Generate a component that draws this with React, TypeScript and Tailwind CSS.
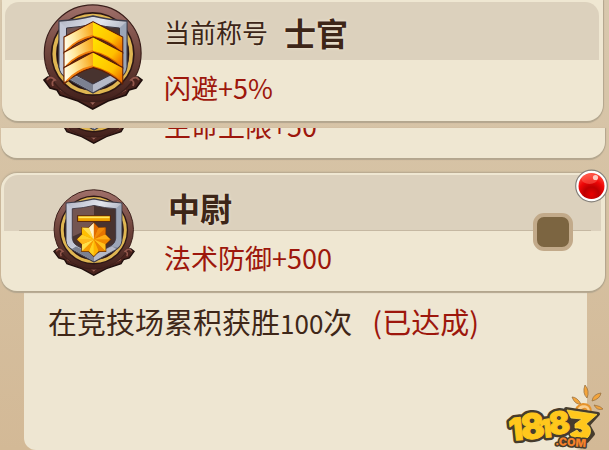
import { useId, type ReactNode } from "react";

type BadgeKind = "chevrons" | "star";

const STAR_POINTS = Array.from({ length: 16 }, (_, i) => {
  const angle = (Math.PI / 8) * i - Math.PI / 2;
  const r = i % 2 === 0 ? 20.5 : 15.5;
  return [49.7 + Math.cos(angle) * r, 61.5 + Math.sin(angle) * r];
});

const STAR_COLORS = [
  "#e06c00", "#f28a08", "#e67400", "#ffad14", "#f08a00", "#ffc21c", "#e98200", "#ffb400",
  "#ffd21e", "#f79c00", "#ffe14a", "#ffb81c", "#ffd028", "#ffc000", "#ffdf50", "#fff3cc",
];

function RankBadge({ kind, className }: { kind: BadgeKind; className?: string }) {
  const id = useId();
  const ring = `${id}ring`;
  const steel = `${id}steel`;
  const left = `${id}left`;
  const right = `${id}right`;

  return (
    <svg viewBox="0 0 100 106" className={className} aria-hidden="true">
      <defs>
        <linearGradient id={ring} x1="0" y1="0" x2="0" y2="1">
          <stop offset="0" stopColor="#a0706a" />
          <stop offset="0.45" stopColor="#74483f" />
          <stop offset="1" stopColor="#42201b" />
        </linearGradient>
        <linearGradient id={steel} x1="0" y1="0" x2="1" y2="1">
          <stop offset="0" stopColor="#aeb2c2" />
          <stop offset="0.35" stopColor="#e2e5ed" />
          <stop offset="0.65" stopColor="#a0a5b5" />
          <stop offset="1" stopColor="#737888" />
        </linearGradient>
        <linearGradient id={left} x1="0" y1="0.6" x2="1" y2="0.4">
          <stop offset="0" stopColor="#fffbe6" />
          <stop offset="0.35" stopColor="#ffe9a0" />
          <stop offset="1" stopColor="#f9a81a" />
        </linearGradient>
        <linearGradient id={right} x1="0" y1="0" x2="1" y2="0.8">
          <stop offset="0" stopColor="#ffe400" />
          <stop offset="0.7" stopColor="#ffc000" />
          <stop offset="1" stopColor="#f07800" />
        </linearGradient>
      </defs>

      {/* Scroll base */}
      <path
        d="M5 73 L1 76 L7 84 L14 86 L17 91 L35 97 L49.7 105 L65 97 L83 91 L86 86 L93 84 L99 76 L95 73Z"
        fill="#4a241e"
        stroke="#1f0f0d"
        strokeWidth="1.6"
      />
      <path d="M17 86 Q32 94 40 93 L49.7 99 L60 93 Q68 94 83 86" fill="none" stroke="#8c5348" strokeWidth="1.4" />
      <path d="M45 95 L49.7 92 L54 95 L49.7 101Z" fill="#9b6257" />

      {/* Rings */}
      <circle cx="49.7" cy="49.3" r="48.4" fill={`url(#${ring})`} stroke="#3a1e1a" strokeWidth="1.2" />
      <circle cx="49.7" cy="50" r="42" fill="#2d1714" />
      <circle cx="49.7" cy="50" r="38.5" fill="#59392f" stroke="#dfb652" strokeWidth="3.6" />
      <circle cx="49.7" cy="50" r="35.5" fill="#49302b" stroke="#241310" strokeWidth="1.6" />
      <path d="M4 76 Q7 71 12 76 Q8 77 10 82" fill="none" stroke="#93574c" strokeWidth="1.8" />
      <path d="M96 76 Q93 71 88 76 Q92 77 90 82" fill="none" stroke="#93574c" strokeWidth="1.8" />

      {/* Shield */}
      <path
        d="M16 17 Q34 16 50 12 Q66 16 84 17 L84 63 Q83 71 75 75 L50 89 L25 75 Q17 71 16 63Z"
        fill={`url(#${steel})`}
        stroke="#3e3d4a"
        strokeWidth="1.3"
      />
      <path d="M16.8 18 L23.5 24 L23.5 62 L28 70 L21 71 Q17 68 16.8 63Z" fill="#c3c7d6" />
      <path d="M83.2 18 L76.5 24 L76.5 62 L72 70 L79 71 Q83 68 83.2 63Z" fill="#9ba5b7" />
      <path d="M28 70 L50 80 L50 88 L23 73Z" fill="#7c8191" />
      <path d="M72 70 L50 80 L50 88 L77 73Z" fill="#b5b9c7" />
      <path
        d="M23.5 24 Q38 23 50 20 Q62 23 76.5 24 L76.5 60 Q76 66 71 69 L50 80 L29 69 Q24 66 23.5 60Z"
        fill="#48332f"
        stroke="#383440"
      />
      <path d="M24 24.5 Q38 23.5 50 20.5 L50 46 L24 58Z" fill="#735551" />

      {kind === "chevrons" &&
        [0, 15.3, 30.6].map((dy) => (
          <g key={dy} transform={`translate(0 ${dy})`} strokeLinejoin="round">
            <path
              d="M50 17.7 L79.7 33 L79.7 49.5 Q66 37 50 33 Q34 37 21 49.5 L21 33Z"
              fill="#e06a00"
              stroke="#5e1e06"
              strokeWidth="1.2"
            />
            <path d="M50 18.2 L50 31.5 Q34 35 21.6 47.5 L21.6 33.4Z" fill={`url(#${left})`} />
            <path d="M50 18.2 L79.2 33.4 L79.2 47 Q66 35 50 31.5Z" fill={`url(#${right})`} />
            <path d="M24 46 Q34 35 50 31.5" fill="none" stroke="#f08010" strokeWidth="1.6" />
          </g>
        ))}

      {kind === "star" && (
        <g>
          <rect x="30" y="32.5" width="40" height="7" fill="#f0a200" stroke="#56240c" strokeWidth="1.2" />
          <path d="M31 34.5 H69" stroke="#ffe75c" strokeWidth="2" />
          <polygon
            points={STAR_POINTS.map((p) => p.join(",")).join(" ")}
            fill="#f29b00"
            stroke="#67300a"
            strokeWidth="1.6"
          />
          {STAR_POINTS.map((p, i) => {
            const next = STAR_POINTS[(i + 1) % 16];
            return (
              <polygon
                key={i}
                points={`49.7,61.5 ${p.join(",")} ${next.join(",")}`}
                fill={STAR_COLORS[i]}
              />
            );
          })}
        </g>
      )}
    </svg>
  );
}

function RedDot() {
  return (
    <svg viewBox="0 0 34 34" className="absolute -top-1 -right-1 z-20 h-[34px] w-[34px]" aria-hidden="true">
      <defs>
        <radialGradient id="dot" cx="0.5" cy="0.82" r="0.8">
          <stop offset="0" stopColor="#e90000" />
          <stop offset="0.35" stopColor="#bd0000" />
          <stop offset="0.65" stopColor="#ef0707" />
          <stop offset="1" stopColor="#ff4a3c" />
        </radialGradient>
      </defs>
      <circle cx="16.5" cy="17" r="15.8" fill="#fff" stroke="#858079" strokeWidth="1.2" />
      <circle cx="16.5" cy="17" r="13" fill="url(#dot)" />
      <ellipse cx="14.5" cy="10" rx="8" ry="5" fill="#ff6a5a" opacity="0.5" />
      <circle cx="20.5" cy="8.5" r="2.6" fill="#ffd9d2" opacity="0.9" />
    </svg>
  );
}

const LOGO_DIGITS = [
  { text: "1", x: 6, y: 57, size: 31 },
  { text: "8", x: 18, y: 56, size: 35 },
  { text: "1", x: 37, y: 54, size: 25 },
  { text: "8", x: 46, y: 51, size: 31 },
];

function LogoDigits() {
  return LOGO_DIGITS.map((d, i) => (
    <text key={i} x={d.x} y={d.y} fontSize={d.size} transform={`rotate(-6 ${d.x} ${d.y})`}>
      {d.text}
    </text>
  ));
}

function SiteLogo() {
  return (
    <svg
      viewBox="0 0 105 66"
      className="absolute right-0 bottom-0 h-[66px] w-[105px] font-['Inter','Lato',sans-serif]"
      role="img"
      aria-label="18183.com"
    >
      {/* Sun */}
      <g fill="#f3a43b" stroke="#9b7444" strokeWidth="0.8">
        <path d="M68 13 Q73 13 77 20 Q71 21 68 13Z" />
        <path d="M81 1 Q86 7 83 14 Q78 9 81 1Z" />
        <path d="M97 9 Q96 15 88 17 Q89 10 97 9Z" />
        <path d="M90 21 Q97 22 99 25 Q93 27 90 21Z" />
      </g>
      <path
        d="M72 31 Q71 21 79 20 Q87 20 87 28 Q86 32 81 31 Q76 30 78 26 Q81 23 83 27"
        fill="#f8cf91"
        stroke="#e6932b"
        strokeWidth="2"
      />

      <g fontWeight="900" strokeLinejoin="round">
        <g fill="#463c2d" stroke="#463c2d" strokeWidth="6">
          <LogoDigits />
          <path d="M62 25 L94 30 L84 41 L89 50 L83 57 L70 57 L64 46Z" strokeWidth="4" />
        </g>
        <g fill="#ffc71c" stroke="#ffc71c" strokeWidth="1">
          <LogoDigits />
        </g>
        {/* Wedge-topped last digit */}
        <path
          d="M63 26 L93 30.5 L82 40 Q88 43 86 50 Q83 57 74 56 Q68 55 66 50 L73 46 Q75 50 78 48 Q80 45 74 44 L71 44 L71 40 L78 35 L67 34Z"
          fill="#ffc71c"
          stroke="#ffda45"
          strokeWidth="0.8"
        />
        <text
          x="51"
          y="61"
          fontSize="11"
          fill="#f5822a"
          stroke="#463c2d"
          strokeWidth="3"
          paintOrder="stroke"
          transform="rotate(4 51 61)"
        >
          .COM
        </text>
      </g>
    </svg>
  );
}

function TitleCard({ badge, title, titleClass, effect, action }: {
  badge: ReactNode;
  title: ReactNode;
  titleClass: string;
  effect: string;
  action?: ReactNode;
}) {
  return (
    <>
      <div className="z-10 col-start-1 row-span-2 row-start-1 flex items-center justify-end">{badge}</div>
      <div className="col-span-full row-start-1 mt-0.5 mr-1 ml-[3px] rounded-t-[14px] bg-[#dcd1bd]" />
      <h2
        className={`col-start-2 row-start-1 flex items-center gap-4 text-[32px] leading-8 font-bold text-[#3d2618] [text-shadow:0_0_3px_#f4ecd8] ${titleClass}`}
      >
        {title}
      </h2>
      <p className="col-start-2 row-start-2 flex items-center pb-1.5 text-[27px] leading-8 text-[#9d170c]">{effect}</p>
      {action}
    </>
  );
}

const CARD = "relative bg-[#efe7d2]";

export default function App() {
  return (
    <main className="relative flex min-h-screen flex-col overflow-hidden bg-linear-to-b from-[#d8c8ad] to-[#d3b996] font-['Noto_Sans_CJK_SC',sans-serif]">
      {/* Current title */}
      <section
        className={`${CARD} mr-[6px] ml-[2px] grid grid-cols-[162px_1fr] grid-rows-[60px_61px] rounded-b-[16px] shadow-[0_2px_1px_#b3a68e,1px_0_1px_#b3a68e]`}
      >
        <TitleCard
          badge={<RankBadge kind="chevrons" className="mr-[21px] mb-[8px] h-[106px] w-[100px]" />}
          titleClass="pt-1"
          title={
            <>
              <span className="text-[26px] font-normal">当前称号</span>
              <span>士官</span>
            </>
          }
          effect="闪避+5%"
        />
      </section>

      {/* Row scrolled under the header */}
      <section className={`${CARD} mt-[7px] mr-1 ml-px rounded-b-[16px] shadow-[0_2px_1px_#b3a68e,1px_0_1px_#b3a68e]`}>
        <div className="flex h-[30px] items-end overflow-hidden">
          <div className="flex w-[163px] shrink-0 justify-end">
            <RankBadge kind="star" className="mr-[29px] mb-[14px] h-[87px] w-[82px]" />
          </div>
          <p className="mb-4 text-[27px] leading-8 text-[#9d170c]">生命上限+50</p>
        </div>
      </section>

      <section
        className={`${CARD} z-10 mt-[15px] mr-1 ml-px grid grid-cols-[163px_1fr_auto] grid-rows-[58px_60px] rounded-[16px] shadow-[0_2px_1px_#b3a68e,1px_0_1px_#b3a68e,0_-1px_2px_#b3a68e]`}
      >
        <TitleCard
          badge={<RankBadge kind="star" className="mr-[29px] h-[87px] w-[82px]" />}
          titleClass="pt-2.5 pl-1"
          title="中尉"
          effect="法术防御+500"
          action={
            <>
              <div className="col-span-full row-start-1 mr-[14px] ml-[18px] self-end border-b border-[#c5b8a2]" />
              <input
                type="checkbox"
                aria-label="中尉"
                className="z-10 col-start-3 row-span-2 row-start-1 mr-8 h-[38px] w-[40px] appearance-none self-center rounded-[11px] border-4 border-[#c2aa8a] bg-[#7c6541]"
              />
            </>
          }
        />
        <RedDot />
      </section>

      {/* Requirement */}
      <section className="mr-[22px] ml-6 flex-1 rounded-b-xl bg-[#eee6d2]">
        <p className="flex gap-5 px-6 pt-2.5 text-[29px] leading-10 text-[#3f2718]">
          <span>
            在竞技场累积获胜<span className="text-[26px]">100</span>次
          </span>
          <span className="text-[#9d170c]">(已达成)</span>
        </p>
      </section>

      <SiteLogo />
    </main>
  );
}
